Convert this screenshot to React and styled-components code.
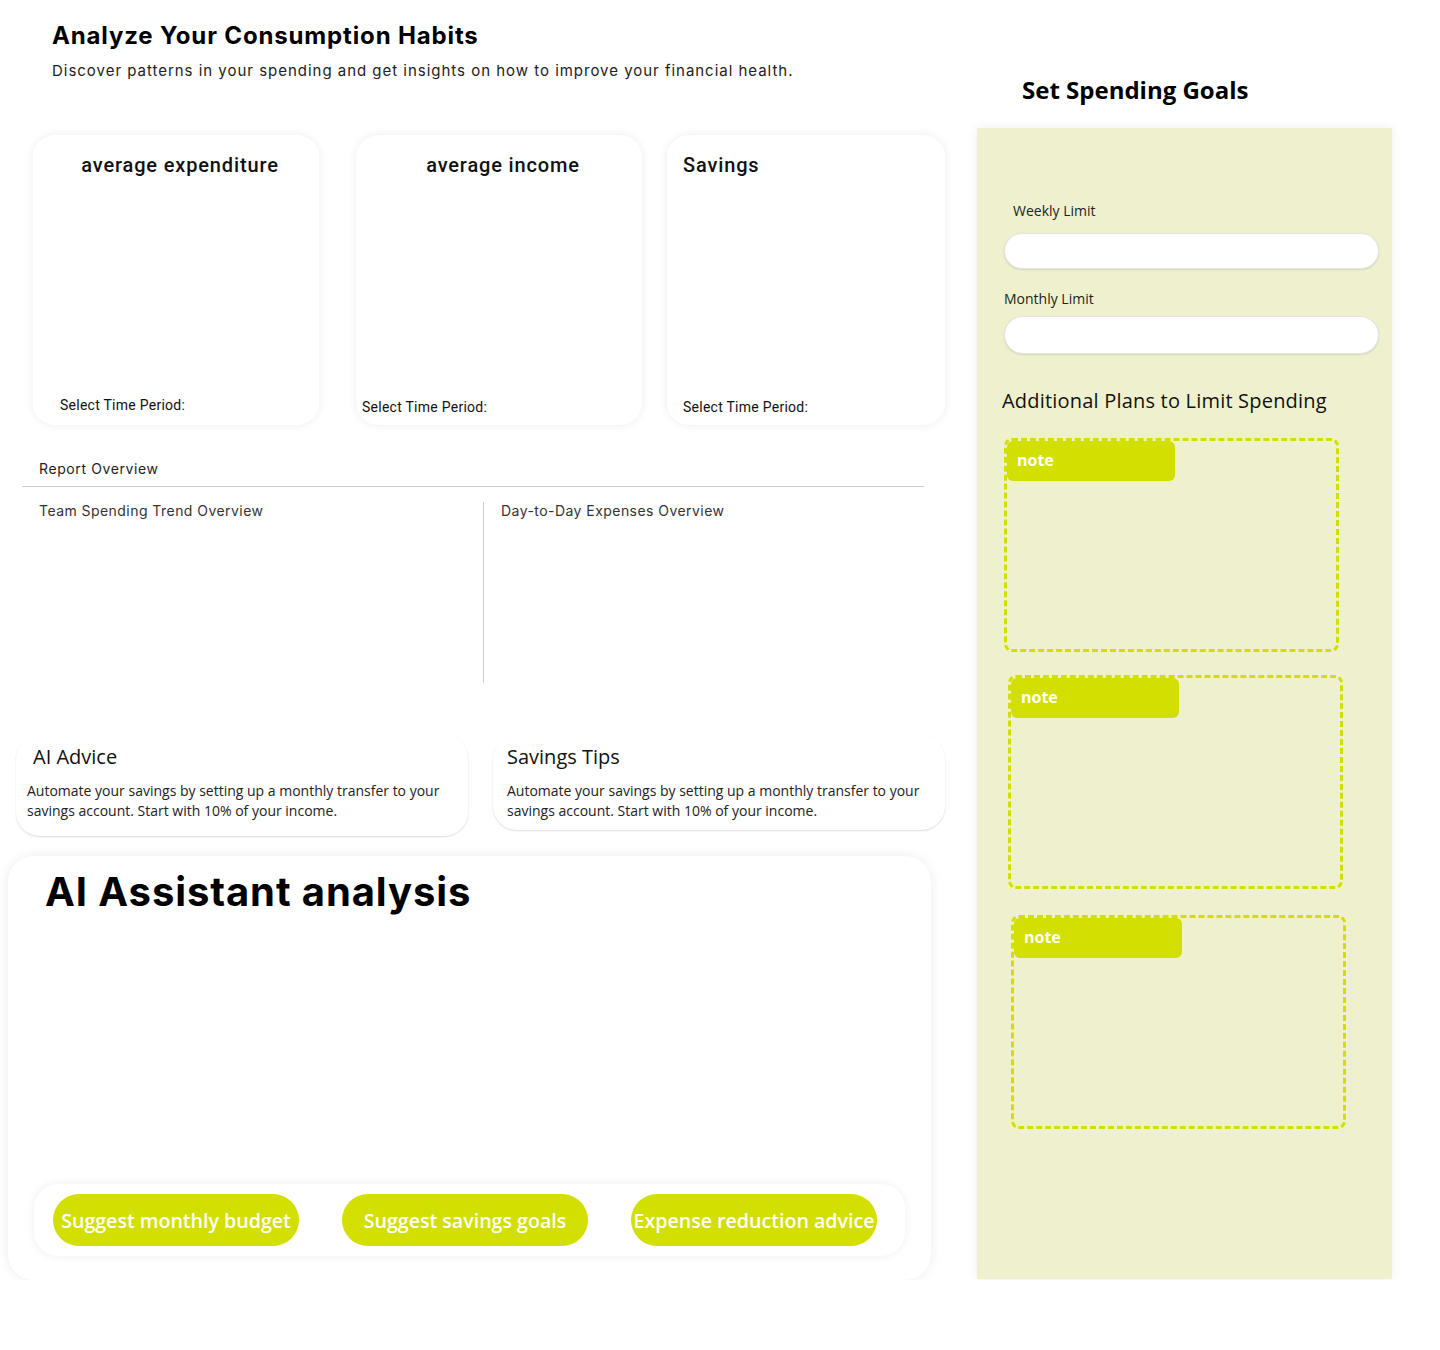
import React from 'react';
import styled, { createGlobalStyle } from 'styled-components';

const GlobalStyle = createGlobalStyle`
  body {
    margin: 0;
    background: #ffffff;
    font-family: 'Open Sans', sans-serif;
  }
`;

const LIME = '#d3df00';

const Page = styled.div`
  display: flex;
  align-items: flex-start;
  width: 1440px;
`;

const LeftColumn = styled.div`
  width: 945px;
  display: flex;
  flex-direction: column;
`;

const Header = styled.div`
  padding: 21px 0 0 52px;
`;

const Title = styled.h1`
  margin: 0;
  font-family: 'Inter', sans-serif;
  font-weight: 700;
  font-size: 24px;
  line-height: 29px;
  letter-spacing: 0.85px;
  color: #000;
`;

const Subtitle = styled.p`
  margin: 11px 0 0;
  font-family: 'Inter', sans-serif;
  font-size: 15px;
  line-height: 20px;
  color: #222;
  letter-spacing: 0.98px;
`;

const CardsRow = styled.div`
  display: flex;
  margin-top: 54px;
  padding-left: 33px;
`;

const StatCard = styled.div`
  width: ${(p) => p.$width}px;
  margin-left: ${(p) => p.$offset || 0}px;
  height: 290px;
  box-sizing: border-box;
  background: #fff;
  border-radius: 22px;
  box-shadow: 0 0 10px rgba(0, 0, 0, 0.08);
  display: flex;
  flex-direction: column;
  justify-content: space-between;
  padding-top: 18px;
  padding-bottom: ${(p) => p.$bottom}px;
`;

const StatTitle = styled.h3`
  margin: 0;
  font-family: 'Roboto', sans-serif;
  font-weight: 500;
  font-size: 20px;
  line-height: 24px;
  letter-spacing: 0.85px;
  color: #111;
  text-align: ${(p) => (p.$center ? 'center' : 'left')};
  padding-left: ${(p) => (p.$center ? 8 : 16)}px;
`;

const PeriodLabel = styled.div`
  font-family: 'Roboto', sans-serif;
  font-size: 14px;
  line-height: 17px;
  letter-spacing: 0.26px;
  color: #111;
  padding-left: ${(p) => p.$indent}px;
`;

const Report = styled.section`
  margin: 35px 0 0 22px;
  width: 902px;
`;

const ReportHeading = styled.div`
  font-family: 'Inter', sans-serif;
  font-size: 14px;
  line-height: 18px;
  letter-spacing: 0.6px;
  color: #222;
  padding: 0 0 8px 17px;
  border-bottom: 1px solid #cfcfcf;
`;

const ReportColumns = styled.div`
  display: grid;
  grid-template-columns: 462px 1fr;
  margin-top: 15px;
`;

const ReportPane = styled.div`
  height: 181px;
  padding-left: 17px;
  border-right: ${(p) => (p.$first ? '1px solid #cfcfcf' : 'none')};
  font-family: 'Inter', sans-serif;
  font-size: 14px;
  line-height: 18px;
  letter-spacing: 0.45px;
  color: #333;
`;

const AdviceRow = styled.div`
  display: flex;
  align-items: flex-start;
  gap: 25px;
  margin: 52px 0 0 16px;
`;

const AdviceCard = styled.div`
  width: 452px;
  height: ${(p) => p.$height}px;
  box-sizing: border-box;
  background: #fff;
  border-radius: 24px;
  box-shadow: 0 1px 2px rgba(0, 0, 0, 0.14);
  padding-top: 8px;
`;

const AdviceTitle = styled.h4`
  margin: 0;
  font-family: 'Open Sans', sans-serif;
  font-weight: 400;
  font-size: 20px;
  line-height: 27px;
  color: #111;
  padding-left: ${(p) => p.$indent}px;
`;

const AdviceText = styled.p`
  margin: 11px 0 0;
  font-family: 'Open Sans', sans-serif;
  font-size: 14px;
  line-height: 20px;
  color: #222;
  padding-left: ${(p) => p.$indent}px;
  padding-right: 16px;
`;

const Assistant = styled.div`
  margin: 20px 0 0 8px;
  width: 923px;
  height: 424px;
  box-sizing: border-box;
  background: #fff;
  border-radius: 26px;
  box-shadow: 0 0 12px rgba(0, 0, 0, 0.08);
  display: flex;
  flex-direction: column;
  justify-content: space-between;
  padding: 12px 0 24px;
`;

const AssistantTitle = styled.h2`
  margin: 0;
  padding-left: 37px;
  font-family: 'Inter', sans-serif;
  font-weight: 700;
  font-size: 40px;
  line-height: 48px;
  letter-spacing: 0.9px;
  color: #000;
`;

const ActionBar = styled.div`
  margin-left: 26px;
  width: 871px;
  box-sizing: border-box;
  background: #fff;
  border-radius: 24px;
  box-shadow: 0 0 10px rgba(0, 0, 0, 0.07);
  padding: 10px 19px;
  display: flex;
  gap: 43px;
`;

const ActionButton = styled.button`
  width: 246px;
  height: 52px;
  padding: 0;
  border: none;
  border-radius: 26px;
  background: ${LIME};
  color: #fff;
  font-family: 'Open Sans', sans-serif;
  font-weight: 600;
  font-size: 19.6px;
  white-space: nowrap;
  cursor: pointer;
`;

const RightColumn = styled.aside`
  margin-left: 32px;
  width: 415px;
`;

const GoalsHeading = styled.h2`
  margin: 73px 0 0;
  padding-left: 45px;
  font-family: 'Open Sans', sans-serif;
  font-weight: 700;
  font-size: 24px;
  line-height: 33px;
  color: #000;
`;

const GoalsPanel = styled.div`
  margin-top: 22px;
  height: 1151px;
  box-sizing: border-box;
  background: #eff1ce;
  box-shadow: 0 0 10px rgba(0, 0, 0, 0.08);
  padding: 73px 13px 0 27px;
  display: flex;
  flex-direction: column;
  align-items: flex-start;
`;

const FieldLabel = styled.label`
  font-family: 'Open Sans', sans-serif;
  font-size: 14px;
  line-height: 19px;
  color: #222;
  padding-left: ${(p) => p.$indent || 0}px;
  margin-top: ${(p) => p.$top || 0}px;
`;

const LimitInput = styled.input`
  width: 375px;
  height: ${(p) => p.$height}px;
  box-sizing: border-box;
  margin-top: ${(p) => p.$top}px;
  border: 1px solid #e4e4e4;
  border-radius: 19px;
  background: #fff;
  box-shadow: 0 1px 2px rgba(0, 0, 0, 0.12);
  outline: none;
`;

const PlansHeading = styled.h3`
  margin: 33px 0 0 -2px;
  font-family: 'Open Sans', sans-serif;
  font-weight: 400;
  font-size: 20px;
  line-height: 27px;
  letter-spacing: 0.2px;
  color: #111;
`;

const NoteBox = styled.div`
  width: 335px;
  height: 214px;
  box-sizing: border-box;
  margin-top: ${(p) => p.$top}px;
  margin-left: ${(p) => p.$shift}px;
  border: 3px dashed ${LIME};
  border-radius: 8px;
`;

const NoteTab = styled.div`
  width: 168px;
  height: 40px;
  box-sizing: border-box;
  background: ${LIME};
  border-radius: 6px;
  padding-left: 10px;
  font-family: 'Open Sans', sans-serif;
  font-weight: 700;
  font-size: 16px;
  line-height: 39px;
  color: #fff;
`;

const stats = [
  { title: 'average expenditure', width: 286, offset: 0, center: true, indent: 27, bottom: 11 },
  { title: 'average income', width: 286, offset: 37, center: true, indent: 6, bottom: 9 },
  { title: 'Savings', width: 278, offset: 25, center: false, indent: 16, bottom: 9 },
];

const advice = [
  { title: 'AI Advice', height: 101, titleIndent: 17, textIndent: 11 },
  { title: 'Savings Tips', height: 95, titleIndent: 14, textIndent: 14 },
];

const actions = ['Suggest monthly budget', 'Suggest savings goals', 'Expense reduction advice'];

const notes = [
  { top: 24, shift: 0 },
  { top: 23, shift: 4 },
  { top: 26, shift: 7 },
];

const App = () => {
  return (
    <>
      <GlobalStyle />
      <Page>
        <LeftColumn>
          <Header>
            <Title>Analyze Your Consumption Habits</Title>
            <Subtitle>
              Discover patterns in your spending and get insights on how to improve your financial health.
            </Subtitle>
          </Header>

          <CardsRow>
            {stats.map((s) => (
              <StatCard key={s.title} $width={s.width} $offset={s.offset} $bottom={s.bottom}>
                <StatTitle $center={s.center}>{s.title}</StatTitle>
                <PeriodLabel $indent={s.indent}>Select Time Period:</PeriodLabel>
              </StatCard>
            ))}
          </CardsRow>

          <Report>
            <ReportHeading>Report Overview</ReportHeading>
            <ReportColumns>
              <ReportPane $first>Team Spending Trend Overview</ReportPane>
              <ReportPane>Day-to-Day Expenses Overview</ReportPane>
            </ReportColumns>
          </Report>

          <AdviceRow>
            {advice.map((a) => (
              <AdviceCard key={a.title} $height={a.height}>
                <AdviceTitle $indent={a.titleIndent}>{a.title}</AdviceTitle>
                <AdviceText $indent={a.textIndent}>
                  Automate your savings by setting up a monthly transfer to your savings account. Start with 10% of your income.
                </AdviceText>
              </AdviceCard>
            ))}
          </AdviceRow>

          <Assistant>
            <AssistantTitle>AI Assistant analysis</AssistantTitle>
            <ActionBar>
              {actions.map((label) => (
                <ActionButton key={label}>{label}</ActionButton>
              ))}
            </ActionBar>
          </Assistant>
        </LeftColumn>

        <RightColumn>
          <GoalsHeading>Set Spending Goals</GoalsHeading>
          <GoalsPanel>
            <FieldLabel $indent={9}>Weekly Limit</FieldLabel>
            <LimitInput $top={13} $height={36} />
            <FieldLabel $top={20}>Monthly Limit</FieldLabel>
            <LimitInput $top={8} $height={38} />
            <PlansHeading>Additional Plans to Limit Spending</PlansHeading>
            {notes.map((n, i) => (
              <NoteBox key={i} $top={n.top} $shift={n.shift}>
                <NoteTab>note</NoteTab>
              </NoteBox>
            ))}
          </GoalsPanel>
        </RightColumn>
      </Page>
    </>
  );
};

export default App;
